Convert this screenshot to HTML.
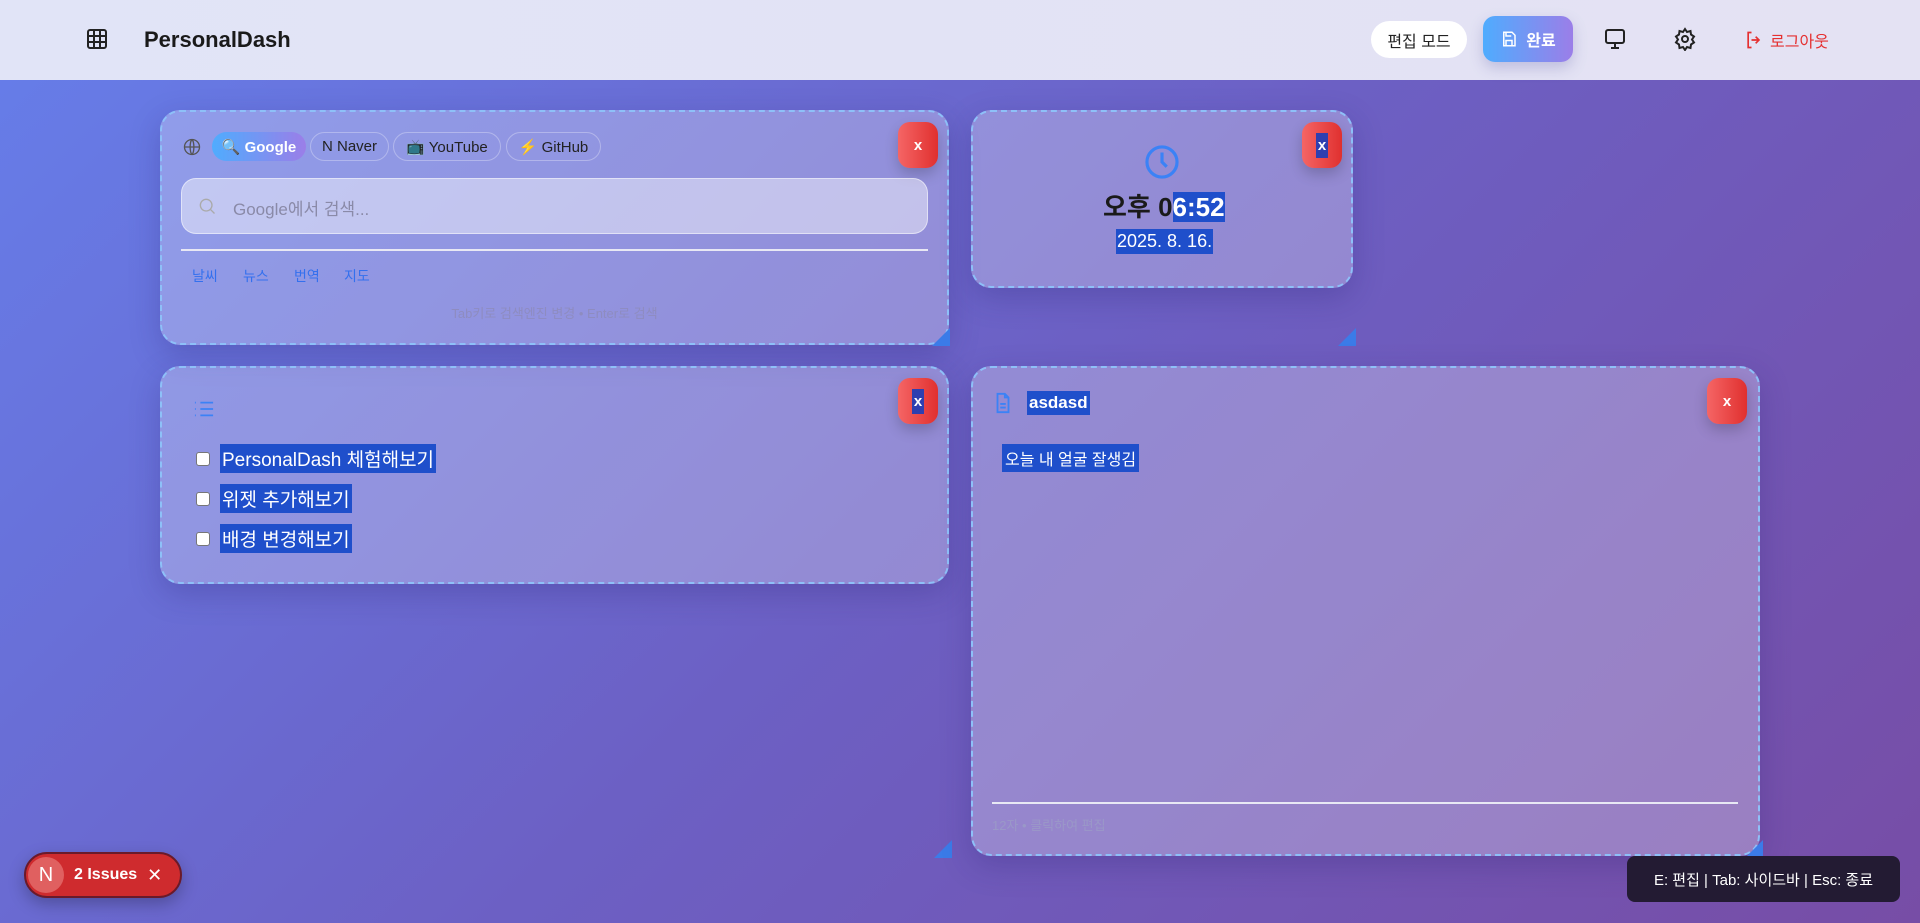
<!DOCTYPE html>
<html><head><meta charset="utf-8"><style>
*{box-sizing:border-box;margin:0;padding:0}
body{width:1920px;height:923px;overflow:hidden;font-family:"Liberation Sans","Noto Sans CJK KR",sans-serif;background:linear-gradient(135deg,#667eea 0%,#6c60c4 50%,#774da6 100%);position:relative}
.hdr{position:absolute;left:0;top:0;width:1920px;height:80px;background:linear-gradient(90deg,#e1e4f7,#e4e2f3);}
.abs{position:absolute}
.card{position:absolute;border:2px dashed #8ec0f8;border-radius:20px;background:rgba(255,255,255,0.27);box-shadow:0 10px 30px rgba(40,30,110,.25)}
.x{position:absolute;width:40px;height:46px;border-radius:12px;background:linear-gradient(90deg,#f56565,#e0302f);color:#fff;font-weight:bold;font-size:15px;display:flex;align-items:center;justify-content:center;box-shadow:0 6px 14px rgba(0,0,0,.2)}
.sel{background:#1f4fcb;color:#fff}
.chip{position:absolute;top:132px;height:29px;border-radius:15px;border:1px solid rgba(255,255,255,.3);font-size:15px;color:#222;display:flex;align-items:center;justify-content:center;gap:5px}
.tri{position:absolute;width:0;height:0;border-left:18px solid transparent;border-bottom:18px solid #3b7be8}
.lnk{position:absolute;top:266px;font-size:14px;color:#3370ee}
.todo{position:absolute;left:196px;display:flex;align-items:center;font-size:19px}
.cb{width:14px;height:14px;background:#fff;border:1px solid #777;border-radius:3px;margin-right:10px}
</style></head><body>
<div class="hdr"></div>
<svg class="abs" style="left:85px;top:27px" width="24" height="24" viewBox="0 0 24 24" fill="none" stroke="#222" stroke-width="2"><rect x="3" y="3" width="18" height="18" rx="2"/><path d="M3 9h18M3 15h18M9 3v18M15 3v18"/></svg>
<div class="abs" style="left:144px;top:27px;font-size:22px;font-weight:bold;color:#1a1a1a">PersonalDash</div>
<div class="abs" style="left:1371px;top:21px;width:96px;height:37px;border-radius:19px;background:#fff;font-size:16px;display:flex;align-items:center;justify-content:center;color:#222">편집 모드</div>
<div class="abs" style="left:1483px;top:16px;width:90px;height:46px;border-radius:12px;background:linear-gradient(90deg,#4facfe,#9b7ee8);color:#fff;font-weight:bold;font-size:16px;display:flex;align-items:center;justify-content:center;gap:8px;box-shadow:0 6px 14px rgba(80,80,160,.25)"><svg width="18" height="18" viewBox="0 0 24 24" fill="none" stroke="#fff" stroke-width="2"><path d="M5 3h11l4 4v14H5z"/><path d="M8 3v5h7M8 21v-7h8v7"/></svg>완료</div>
<svg class="abs" style="left:1603px;top:27px" width="24" height="24" viewBox="0 0 24 24" fill="none" stroke="#222" stroke-width="2"><rect x="3" y="3" width="18" height="13" rx="2"/><path d="M12 16v4M8 21h8"/></svg>
<svg class="abs" style="left:1673px;top:27px" width="24" height="24" viewBox="0 0 24 24" fill="none" stroke="#222" stroke-width="2"><circle cx="12" cy="12" r="3"/><path d="M12 2l2 3 3.5-1 .5 3.5 3 2-2 3 2 3-3 2-.5 3.5-3.5-1-2 3-2-3-3.5 1-.5-3.5-3-2 2-3-2-3 3-2 .5-3.5 3.5 1z"/></svg>
<div class="abs" style="left:1744px;top:28px;font-size:16px;color:#e53030;display:flex;align-items:center;gap:6px"><svg width="20" height="20" viewBox="0 0 24 24" fill="none" stroke="#e53030" stroke-width="2"><path d="M9 3H5v18h4M14 8l4 4-4 4M18 12H9"/></svg>로그아웃</div>

<div class="card" style="left:160px;top:110px;width:789px;height:235px"></div>
<svg class="abs" style="left:182px;top:137px" width="20" height="20" viewBox="0 0 24 24" fill="none" stroke="#555" stroke-width="1.6"><circle cx="12" cy="12" r="9"/><path d="M3 12h18M12 3c3 3 3 15 0 18M12 3c-3 3-3 15 0 18"/></svg>
<div class="chip" style="left:212px;width:94px;background:linear-gradient(90deg,#4facfe,#9b7ee8);color:#fff;font-weight:bold;border:none">🔍 Google</div>
<div class="chip" style="left:310px;width:79px">N Naver</div>
<div class="chip" style="left:393px;width:108px">📺 YouTube</div>
<div class="chip" style="left:506px;width:95px">⚡ GitHub</div>
<div class="x" style="left:898px;top:122px">x</div>
<div class="abs" style="left:181px;top:178px;width:747px;height:56px;border-radius:15px;background:rgba(255,255,255,.45);border:1px solid rgba(255,255,255,.5)"></div>
<svg class="abs" style="left:197px;top:196px" width="20" height="20" viewBox="0 0 24 24" fill="none" stroke="#aaa" stroke-width="1.6"><circle cx="11" cy="11" r="7"/><path d="M16 16l5 5"/></svg>
<div class="abs" style="left:233px;top:195px;font-size:17px;color:#8a8aa8">Google에서 검색...</div>
<div class="abs" style="left:181px;top:249px;width:747px;height:2px;background:#e8e8f4"></div>
<div class="lnk" style="left:192px">날씨</div><div class="lnk" style="left:243px">뉴스</div><div class="lnk" style="left:294px">번역</div><div class="lnk" style="left:344px">지도</div>
<div class="abs" style="left:160px;width:789px;top:303px;text-align:center;font-size:13px;color:#8e8cc0">Tab키로 검색엔진 변경 • Enter로 검색</div>
<div class="tri" style="left:932px;top:328px"></div>

<div class="card" style="left:971px;top:110px;width:382px;height:178px"></div>
<svg class="abs" style="left:1143px;top:143px" width="38" height="38" viewBox="0 0 24 24" fill="none" stroke="#3b82f6" stroke-width="2"><circle cx="12" cy="12" r="9.5"/><path d="M12 6v6l3 3"/></svg>
<div class="abs" style="left:1103px;top:192px;font-size:26px;font-weight:bold;color:#1a1a1a;line-height:30px">오후 0<span class="sel">6:52</span></div>
<div class="abs sel" style="left:1116px;top:229px;font-size:18px;padding:2px 1px">2025. 8. 16.</div>
<div class="x" style="left:1302px;top:122px"><span class="sel" style="background:#2e3fb0;padding:4px 2px">x</span></div>
<div class="tri" style="left:1338px;top:328px"></div>

<div class="card" style="left:160px;top:366px;width:789px;height:218px"></div>
<svg class="abs" style="left:193px;top:399px" width="22" height="20" viewBox="0 0 24 22" fill="none" stroke="#3b82f6" stroke-width="2"><path d="M8 4h14M8 11h14M8 18h14M2 4h1M2 11h1M2 18h1"/></svg>
<div class="x" style="left:898px;top:378px"><span class="sel" style="background:#2e3fb0;padding:4px 2px">x</span></div>
<div class="todo" style="top:444px"><div class="cb"></div><span class="sel" style="padding:1px 2px">PersonalDash 체험해보기</span></div>
<div class="todo" style="top:484px"><div class="cb"></div><span class="sel" style="padding:1px 2px">위젯 추가해보기</span></div>
<div class="todo" style="top:524px"><div class="cb"></div><span class="sel" style="padding:1px 2px">배경 변경해보기</span></div>
<div class="tri" style="left:934px;top:840px"></div>

<div class="card" style="left:971px;top:366px;width:789px;height:490px"></div>
<svg class="abs" style="left:992px;top:391px" width="22" height="24" viewBox="0 0 24 24" fill="none" stroke="#3b82f6" stroke-width="2"><path d="M14 2H6v20h12V6z"/><path d="M14 2v4h4M9 13h6M9 17h6"/></svg>
<div class="abs sel" style="left:1027px;top:391px;font-size:17px;font-weight:bold;padding:2px 2px">asdasd</div>
<div class="x" style="left:1707px;top:378px">x</div>
<div class="abs sel" style="left:1002px;top:444px;font-size:16px;padding:2px 3px">오늘 내 얼굴 잘생김</div>
<div class="abs" style="left:992px;top:802px;width:746px;height:2px;background:#e8e8f4"></div>
<div class="abs" style="left:992px;top:815px;font-size:13px;color:#9a98c8">12자 • 클릭하여 편집</div>
<div class="tri" style="left:1745px;top:840px"></div>

<div class="abs" style="left:24px;top:852px;width:158px;height:46px;border-radius:23px;background:#cf2b2e;border:2px solid #6a1a2a;box-shadow:0 6px 16px rgba(0,0,0,.25);display:flex;align-items:center;color:#fff;font-size:16px;font-weight:bold">
<div style="width:36px;height:36px;border-radius:18px;background:#e06060;margin-left:2px;display:flex;align-items:center;justify-content:center;font-weight:normal;font-size:20px">N</div>
<span style="margin-left:10px">2 Issues</span><span style="margin-left:10px;font-weight:normal;font-size:18px">✕</span></div>
<div class="abs" style="left:1627px;top:856px;width:273px;height:46px;border-radius:8px;background:#231b33;color:#fff;font-size:15px;display:flex;align-items:center;justify-content:center">E: 편집 | Tab: 사이드바 | Esc: 종료</div>
</body></html>
